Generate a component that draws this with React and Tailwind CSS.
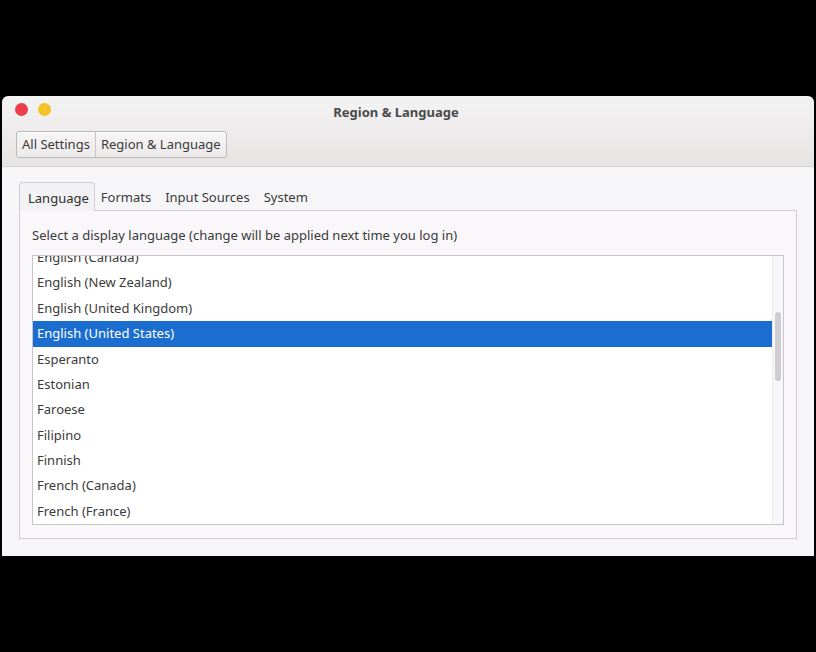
import React from "react";

const rows = [
  "English (Canada)",
  "English (New Zealand)",
  "English (United Kingdom)",
  "English (United States)",
  "Esperanto",
  "Estonian",
  "Faroese",
  "Filipino",
  "Finnish",
  "French (Canada)",
  "French (France)",
];

export default function App() {
  return (
    <div
      className="w-[816px] h-[652px] bg-black flex flex-col"
      style={{ fontFamily: '"Noto Sans", "Open Sans", sans-serif' }}
    >
      <div className="h-[96px] shrink-0" />
      <div className="ml-[2px] w-[812px] h-[460px] shrink-0 flex flex-col rounded-t-[6px] overflow-hidden">
        {/* header */}
        <div className="h-[71px] shrink-0 bg-gradient-to-b from-[#f4f3f3] to-[#e6e3e3] border-b border-[#d6d3d6] flex flex-col px-[13px]">
          <div className="h-[26px] flex items-center relative">
            <div className="flex items-center gap-[10px]">
              <div className="w-[13px] h-[13px] rounded-full bg-[#ec3f4b]" />
              <div className="w-[13px] h-[13px] rounded-full bg-[#f6c22a]" />
            </div>
            <div className="absolute left-0 right-0 top-[7px] text-center text-[13px] font-bold text-[#4a4a4a] leading-[18px]">
              <span className="ml-[-24px]">Region &amp; Language</span>
            </div>
          </div>
          <div className="mt-[9px] flex pl-[1px]">
            <div className="flex h-[27px] border border-[#bdb9bb] rounded-[3px] overflow-hidden text-[13px] text-[#3a3a3a] bg-gradient-to-b from-[#f7f6f6] to-[#ebe9e9] shadow-[inset_0_1px_0_#ffffff]">
              <div className="px-[5px] flex items-center border-r border-[#c9c5c7]">All Settings</div>
              <div className="px-[5px] flex items-center">Region &amp; Language</div>
            </div>
          </div>
        </div>
        {/* content */}
        <div className="flex-1 min-h-0 bg-[#f6f5f7] pt-[15px] px-[17px] pb-[17px] flex flex-col">
          <div className="flex h-[28px] shrink-0 items-end text-[13px] text-[#3a3a3a]">
            <div className="h-[29px] pl-[8px] pr-[5px] pt-[3px] flex items-center border border-b-0 border-[#cfccd2] rounded-t-[4px] bg-[#f2f1f3] relative top-[1px] text-[#2e2e2e]">
              Language
            </div>
            <div className="h-[28px] pl-[6px] pr-[7px] pt-[3px] flex items-center">Formats</div>
            <div className="h-[28px] px-[7px] pt-[3px] flex items-center">Input Sources</div>
            <div className="h-[28px] px-[7px] pt-[3px] flex items-center">System</div>
          </div>
          <div className="flex-1 min-h-0 border border-[#cfccd2] bg-[#f9f7fa] px-[12px] pt-[15px] pb-[13px] flex flex-col">
            <div className="text-[13px] text-[#3a3a3a] leading-[18px] h-[29px] shrink-0">
              Select a display language (change will be applied next time you log in)
            </div>
            <div className="flex-1 min-h-0 bg-white border border-[#c9c6cb] flex overflow-hidden">
              <div className="flex-1 overflow-hidden">
                <div className="-mt-[11px]">
                  {rows.map((r, i) => (
                    <div
                      key={r}
                      className={
                        i === 3
                          ? "h-[25.4px] flex items-center pl-[4px] text-[13px] bg-[#1c6dd0] text-white"
                          : "h-[25.4px] flex items-center pl-[4px] text-[13px] text-[#3b3b3b]"
                      }
                    >
                      {r}
                    </div>
                  ))}
                </div>
              </div>
              <div className="w-[11px] shrink-0 bg-[#f7f6f8] border-l border-[#ebe9ec] flex justify-center items-start">
                <div className="mt-[56px] w-[6px] h-[69px] rounded-[3px] bg-[#cfcdd0]" />
              </div>
            </div>
          </div>
        </div>
      </div>
      <div className="flex-1" />
    </div>
  );
}
